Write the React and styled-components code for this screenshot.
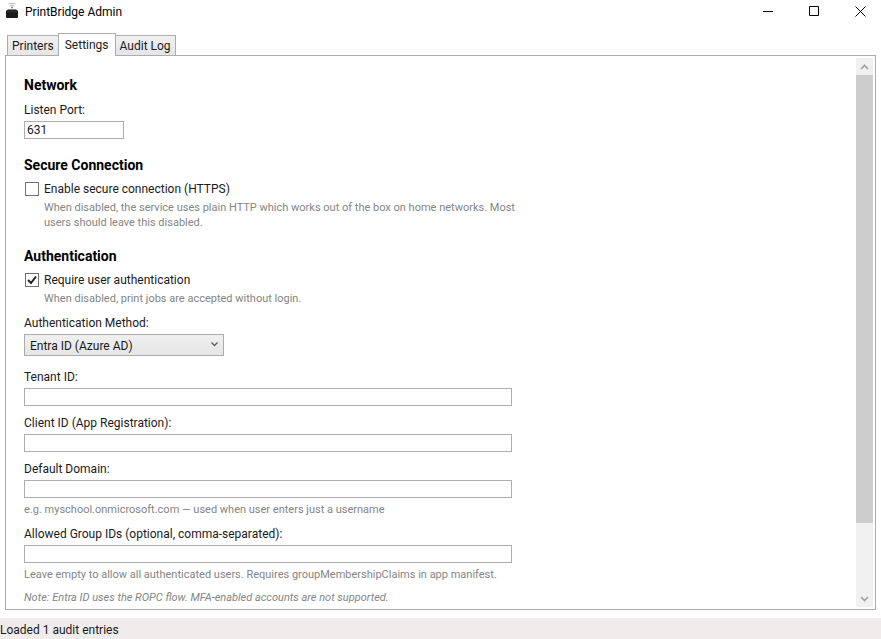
import { useState } from "react"
import styled, { createGlobalStyle } from "styled-components"

const tabs = ["Printers", "Settings", "Audit Log"]

export default function App() {
    const [activeTab, setActiveTab] = useState("Settings")

    return (
        <Window>
            <GlobalStyle />
            <TitleBar>
                <PrinterLogo />
                <Title>PrintBridge Admin</Title>
                <WindowButton type="button" aria-label="Minimize">
                    <svg width="11" height="11"><path d="M0 5.5H10" /></svg>
                </WindowButton>
                <WindowButton type="button" aria-label="Maximize">
                    <svg width="11" height="11"><path d="M0.5 0.5H9.5V9.5H0.5Z" /></svg>
                </WindowButton>
                <WindowButton type="button" aria-label="Close">
                    <svg width="11" height="11"><path d="M0.5 0.5L10.5 10.5M10.5 0.5L0.5 10.5" /></svg>
                </WindowButton>
            </TitleBar>

            <TabList role="tablist">
                {tabs.map((tab) => (
                    <Tab key={tab} type="button" role="tab" $active={tab === activeTab} aria-selected={tab === activeTab} onClick={() => setActiveTab(tab)}>
                        {tab}
                    </Tab>
                ))}
            </TabList>

            <Panel>
                {activeTab === "Settings" ? <SettingsForm /> : <Form />}
                <ScrollBar>
                    <ScrollButton type="button" aria-label="Scroll up">
                        <svg width="9" height="6"><path d="M1 5L4.5 1.5L8 5" /></svg>
                    </ScrollButton>
                    <ScrollTrack>
                        <ScrollThumb />
                    </ScrollTrack>
                    <ScrollButton type="button" aria-label="Scroll down">
                        <svg width="9" height="6"><path d="M1 1L4.5 4.5L8 1" /></svg>
                    </ScrollButton>
                </ScrollBar>
            </Panel>

            <StatusBar>Loaded 1 audit entries</StatusBar>
        </Window>
    )
}

function SettingsForm() {
    const [port, setPort] = useState("631")
    const [https, setHttps] = useState(false)
    const [requireAuth, setRequireAuth] = useState(true)

    return (
        <Form>
            <Section>
                <Heading>Network</Heading>
                <Label htmlFor="port">Listen Port:</Label>
                <TextBox id="port" type="text" $short value={port} onChange={(event) => setPort(event.target.value)} />
            </Section>

            <Section>
                <Heading>Secure Connection</Heading>
                <CheckLabel>
                    <CheckBox checked={https} onChange={(event) => setHttps(event.target.checked)} />
                    Enable secure connection (HTTPS)
                </CheckLabel>
                <Hint $indent>
                    When disabled, the service uses plain HTTP which works out of the box on home networks. Most
                    <br />
                    users should leave this disabled.
                </Hint>
            </Section>

            <Section>
                <Heading>Authentication</Heading>
                <CheckLabel>
                    <CheckBox checked={requireAuth} onChange={(event) => setRequireAuth(event.target.checked)} />
                    Require user authentication
                </CheckLabel>
                <Hint $indent>When disabled, print jobs are accepted without login.</Hint>

                <Field>
                    <Label htmlFor="method">Authentication Method:</Label>
                    <SelectBox>
                        <Select id="method" defaultValue="entra">
                            <option value="entra">Entra ID (Azure AD)</option>
                        </Select>
                        <svg width="7" height="5"><path d="M0.5 0.5L3.5 3.5L6.5 0.5" /></svg>
                    </SelectBox>
                </Field>
                <Field $apart>
                    <Label htmlFor="tenant">Tenant ID:</Label>
                    <TextBox id="tenant" type="text" />
                </Field>
                <Field>
                    <Label htmlFor="client">Client ID (App Registration):</Label>
                    <TextBox id="client" type="text" />
                </Field>
                <Field>
                    <Label htmlFor="domain">Default Domain:</Label>
                    <TextBox id="domain" type="text" />
                    <Hint>e.g. myschool.onmicrosoft.com — used when user enters just a username</Hint>
                </Field>
                <Field>
                    <Label htmlFor="groups">Allowed Group IDs (optional, comma-separated):</Label>
                    <TextBox id="groups" type="text" />
                    <Hint>Leave empty to allow all authenticated users. Requires groupMembershipClaims in app manifest.</Hint>
                </Field>
                <Note>Note: Entra ID uses the ROPC flow. MFA-enabled accounts are not supported.</Note>
            </Section>
        </Form>
    )
}

function CheckBox({ checked, onChange }) {
    return (
        <CheckFrame>
            <input type="checkbox" checked={checked} onChange={onChange} />
            {checked && <svg width="14" height="14"><path d="M3 7L6 10L11 3.5" /></svg>}
        </CheckFrame>
    )
}

function PrinterLogo() {
    return (
        <Logo width="14" height="16" viewBox="0 0 14 16">
            <path d="M3.5 1C5.5 0.2 8.5 0.2 10.5 1M4.5 3C6 2 8 2 9.5 3" fill="none" stroke="#b5b5b5" />
            <circle cx="7" cy="4.5" r="1" fill="#8a8a8a" />
            <path d="M3 6.5H11L13 8V14Q13 15 12 15H2Q1 15 1 14V8Z" fill="#1b1b1b" />
            <path d="M2 8.5H12" stroke="#333333" />
        </Logo>
    )
}

const GlobalStyle = createGlobalStyle`
    * {
        box-sizing: border-box;
    }
    body {
        margin: 0;
        background-color: #ffffff;
    }
    body, button, input, select {
        font-family: 'Segoe UI', Roboto, 'Open Sans', sans-serif;
        font-size: 12px;
        color: #1a1a1a;
    }
`
const Window = styled.div`
    height: 100vh;
    display: flex;
    flex-direction: column;
`
const TitleBar = styled.header`
    height: 23px;
    display: flex;
    align-items: center;
    flex-shrink: 0;
    padding-left: 5px;
    color: #000000;
`
const Logo = styled.svg`
    margin-bottom: 2px;
`
const Title = styled.h1`
    flex: 1;
    margin: 0 0 0 6px;
    font-size: 12px;
    font-weight: 400;
    line-height: 22px;
`
const WindowButton = styled.button`
    width: 46px;
    height: 23px;
    padding: 0 0 0 5px;
    display: flex;
    align-items: center;
    justify-content: center;
    background: none;
    border: none;
    svg {
        fill: none;
        stroke: #000000;
    }
`
const TabList = styled.div`
    height: 32px;
    display: flex;
    align-items: flex-end;
    flex-shrink: 0;
    padding-left: 7px;
`
const Tab = styled.button`
    height: ${({ $active }) => ($active ? 23 : 20)}px;
    margin: ${({ $active }) => ($active ? "0 -1px -1px" : "0")};
    padding: ${({ $active }) => ($active ? "0 6px" : "0 4px")};
    background: ${({ $active }) => ($active ? "#ffffff" : "linear-gradient(#f0f0f0, #e5e5e5)")};
    border: 1px solid #acacac;
    border-bottom: none;
    z-index: ${({ $active }) => ($active ? 1 : 0)};
`
const Panel = styled.main`
    flex: 1;
    min-height: 0;
    display: flex;
    margin: 0 5px 8px;
    padding: 0 2px 0 0;
    border: 1px solid #acacac;
`
const Form = styled.form`
    flex: 1;
    padding: 19px 18px 0;
    overflow: hidden;
`
const Section = styled.section`
    max-width: 488px;
    & + & {
        margin-top: 16px;
    }
`
const Heading = styled.h2`
    margin: 0 0 7px;
    font-size: 14px;
    font-weight: 700;
    line-height: 20px;
    color: #000000;
`
const Field = styled.div`
    margin-top: ${({ $apart }) => ($apart ? 13 : 9)}px;
`
const Label = styled.label`
    display: block;
    margin-bottom: 3px;
    line-height: 16px;
`
const TextBox = styled.input`
    display: block;
    width: ${({ $short }) => ($short ? "100px" : "100%")};
    height: 18px;
    padding: 0 2px;
    background-color: #ffffff;
    border: 1px solid #abadb3;
`
const CheckLabel = styled.label`
    display: flex;
    align-items: center;
    gap: 5px;
    padding-left: 1px;
    line-height: 14px;
`
const CheckFrame = styled.span`
    position: relative;
    width: 14px;
    height: 14px;
    input {
        appearance: none;
        display: block;
        width: 14px;
        height: 14px;
        margin: 0;
        background-color: #ffffff;
        border: 1px solid #707070;
    }
    svg {
        position: absolute;
        inset: 0;
        pointer-events: none;
        fill: none;
        stroke: #212121;
        stroke-width: 2;
    }
`
const Hint = styled.p`
    margin: 4px 0 0 ${({ $indent }) => ($indent ? 20 : 0)}px;
    font-size: 11px;
    line-height: 15px;
    white-space: nowrap;
    color: #858585;
`
const Note = styled(Hint)`
    margin-top: 8px;
    font-style: italic;
`
const SelectBox = styled.div`
    position: relative;
    width: 200px;
    svg {
        position: absolute;
        top: 8px;
        right: 6px;
        pointer-events: none;
        fill: none;
        stroke: #606060;
        stroke-width: 1.4;
    }
`
const Select = styled.select`
    appearance: none;
    display: block;
    width: 100%;
    height: 22px;
    padding: 1px 5px 0;
    background: linear-gradient(#f0f0f0, #e5e5e5);
    border: 1px solid #acacac;
    border-radius: 0;
`
const ScrollBar = styled.div`
    width: 17px;
    display: flex;
    flex-direction: column;
    margin: 2px 0;
    background-color: #f0f0f0;
`
const ScrollButton = styled.button`
    height: 17px;
    padding: 0;
    display: flex;
    align-items: center;
    justify-content: center;
    background: none;
    border: none;
    svg {
        fill: none;
        stroke: #a0a0a0;
        stroke-width: 1.6;
    }
`
const ScrollTrack = styled.div`
    flex: 1;
`
const ScrollThumb = styled.div`
    height: 87%;
    background-color: #cdcdcd;
`
const StatusBar = styled.footer`
    height: 21px;
    flex-shrink: 0;
    line-height: 24px;
    background-color: #f0eceb;
`
